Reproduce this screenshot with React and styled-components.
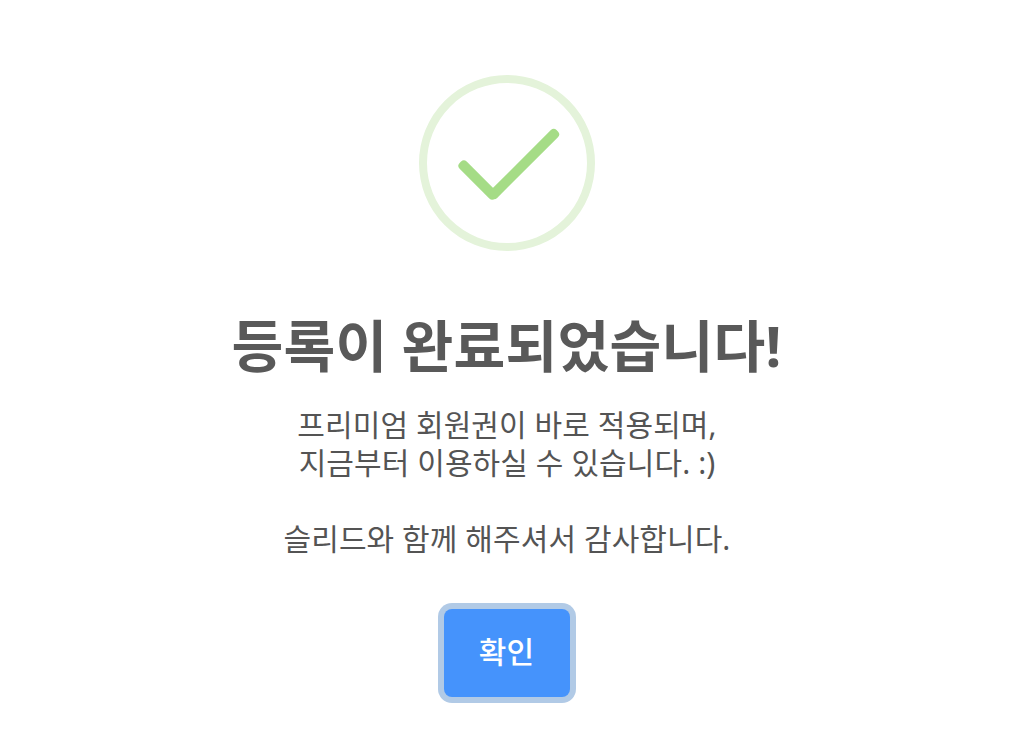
import React from "react";
import styled, { createGlobalStyle } from "styled-components";

const App = () => {
  return (
    <>
      <GlobalStyle />
      <Modal>
        <SuccessIcon viewBox="0 0 176 176">
          <circle cx="88" cy="88" r="84" stroke="#e4f3da" strokeWidth="8" />
          <g fill="#a5dc86">
            <rect x="34" y="100" width="50" height="10" rx="4" transform="rotate(45 59 105)" />
            <rect x="58" y="84" width="94" height="10" rx="4" transform="rotate(-45 105 89)" />
          </g>
        </SuccessIcon>
        <Title>등록이 완료되었습니다!</Title>
        <Message>
          프리미엄 회원권이 바로 적용되며,
          <br />
          지금부터 이용하실 수 있습니다. :)
          <br />
          <br />
          슬리드와 함께 해주셔서 감사합니다.
        </Message>
        <ConfirmButton type="button">확인</ConfirmButton>
      </Modal>
    </>
  );
};

export default App;

const GlobalStyle = createGlobalStyle`
  * {
    box-sizing: border-box;
  }

  body {
    margin: 0;
    background: #ffffff;
    font-family: "Noto Sans", "Noto Sans CJK KR", sans-serif;
  }
`;

const Modal = styled.div`
  display: flex;
  flex-direction: column;
  align-items: center;
  width: 100%;
  height: 743px;
  padding-top: 75px;
  background: #ffffff;
`;

const SuccessIcon = styled.svg`
  width: 176px;
  height: 176px;
  flex-shrink: 0;
  fill: none;
`;

const Title = styled.h2`
  margin: 60px 0 0;
  color: #595959;
  font-size: 56.25px;
  font-weight: 700;
  letter-spacing: 0.25px;
  word-spacing: -1px;
  line-height: 68px;
  white-space: nowrap;
`;

const Message = styled.p`
  margin: 27px 0 0;
  padding-left: 1px;
  color: #545454;
  font-size: 30px;
  font-weight: 400;
  letter-spacing: 0.08px;
  line-height: 38px;
  text-align: center;
  white-space: nowrap;
`;

const ConfirmButton = styled.button`
  width: 126px;
  height: 88px;
  margin-top: 51px;
  padding: 0 0 6px;
  border: none;
  border-radius: 8px;
  background: #4593fc;
  box-shadow: 0 0 0 6px #b1cae6;
  color: #ffffff;
  font-family: inherit;
  font-size: 30px;
  font-weight: 500;
  letter-spacing: 0.2px;
  cursor: pointer;
`;
